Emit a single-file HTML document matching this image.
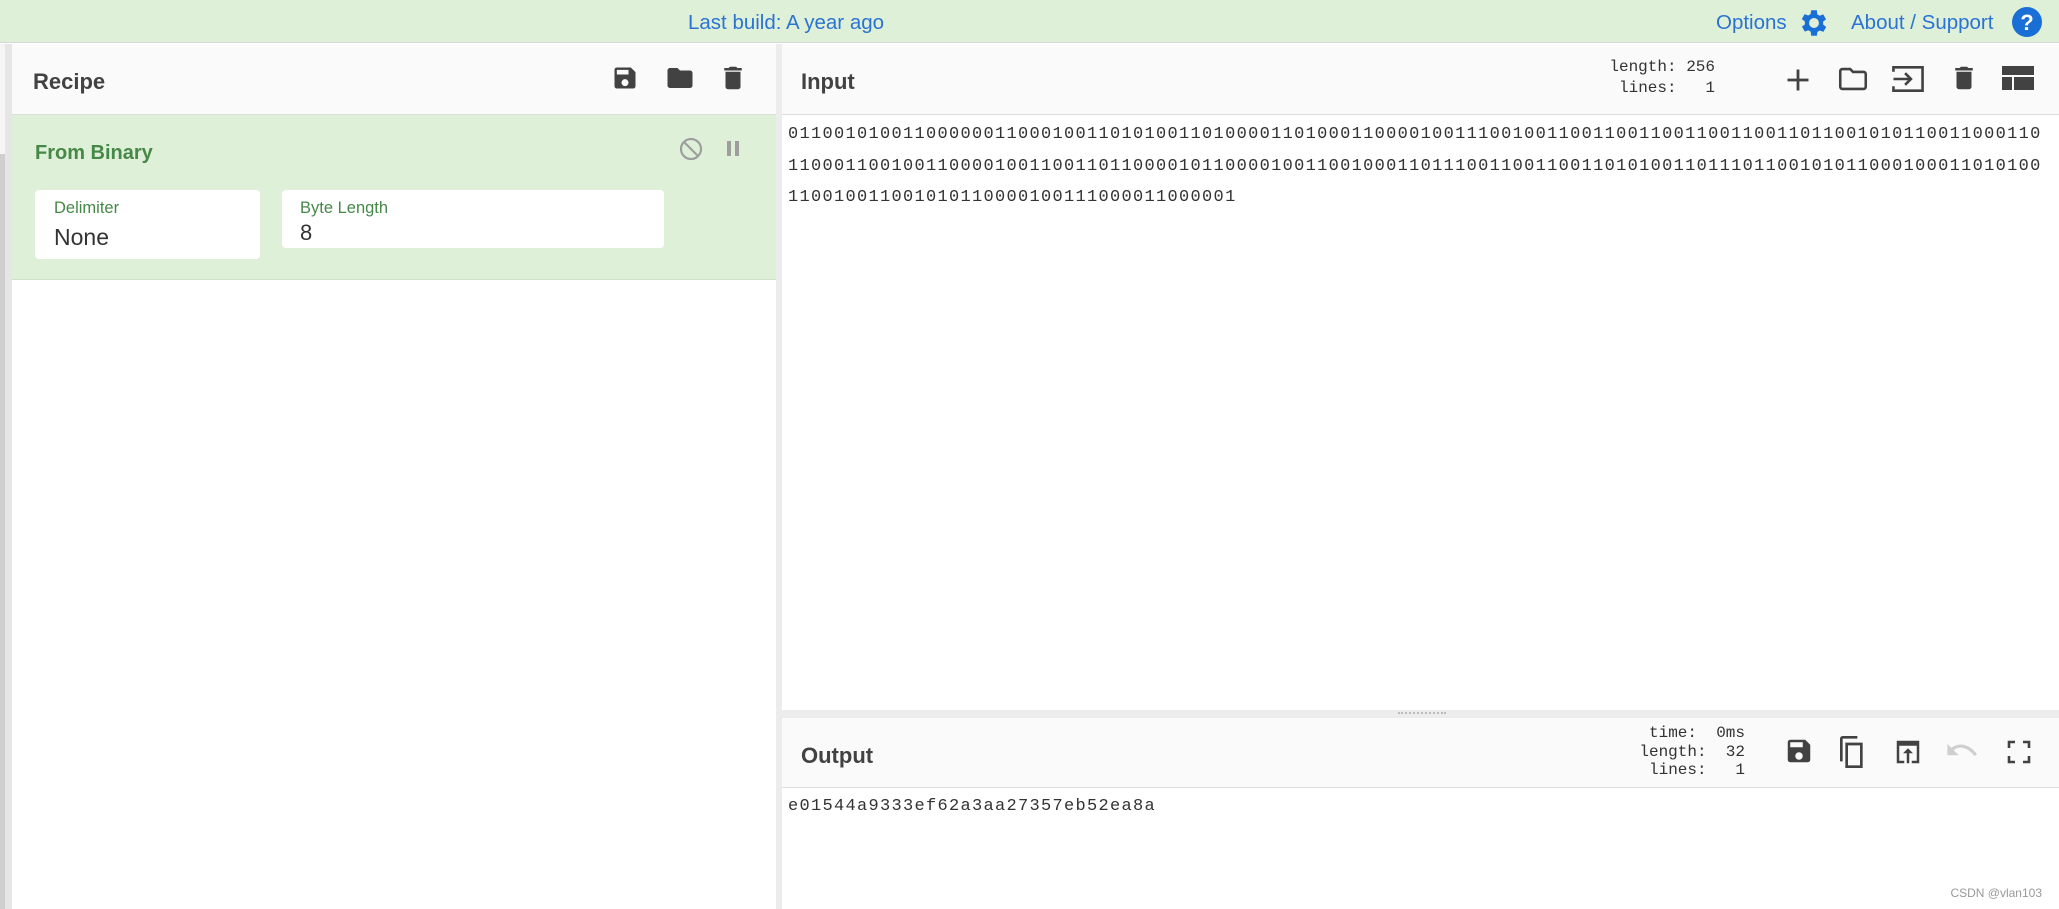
<!DOCTYPE html>
<html><head><meta charset="utf-8"><style>
*{margin:0;padding:0;box-sizing:border-box}
body{width:2059px;height:909px;overflow:hidden;background:#fff;font-family:"Liberation Sans",sans-serif;position:relative;color:#424242}
.a{position:absolute}
.mono{font-family:"Liberation Mono",monospace}
svg{position:absolute}
</style></head><body>
<div class="a" style="left:0;top:0;width:2059px;height:43px;background:#dff0d8;border-bottom:1px solid #d6d6d6"></div>
<div class="a" style="left:688px;top:11px;font-size:20.5px;color:#2a73d2">Last build: A year ago</div>
<div class="a" style="left:1716px;top:11px;font-size:20.5px;color:#2a73d2">Options</div>
<svg style="left:1797px;top:6px" width="34" height="34" viewBox="0 0 24 24"><path fill="#1a6fd6" d="M19.4 13a7.5 7.5 0 0 0 0-2l2.1-1.6-2-3.5-2.5 1a7 7 0 0 0-1.7-1L15 3h-4l-.4 2.7a7 7 0 0 0-1.7 1l-2.5-1-2 3.5L6.6 11a7.5 7.5 0 0 0 0 2l-2.1 1.6 2 3.5 2.5-1a7 7 0 0 0 1.7 1L11 21h4l.4-2.7a7 7 0 0 0 1.7-1l2.5 1 2-3.5zM13 15.5a3.5 3.5 0 1 1 0-7 3.5 3.5 0 0 1 0 7z" transform="translate(-1 0)"/></svg>
<div class="a" style="left:1851px;top:11px;font-size:20.5px;color:#2a73d2">About / Support</div>
<svg style="left:2012px;top:7px" width="30" height="30" viewBox="0 0 30 30"><circle cx="15" cy="15" r="15" fill="#1a6fd6"/><text x="15" y="23" text-anchor="middle" font-family="Liberation Sans" font-weight="bold" font-size="22" fill="#fff">?</text></svg>

<div class="a" style="left:0;top:44px;width:5px;height:110px;background:#f5f5f5"></div>
<div class="a" style="left:0;top:154px;width:5px;height:755px;background:#cfcfcf"></div>
<div class="a" style="left:5px;top:44px;width:7px;height:865px;background:#e6e6e6"></div>

<div class="a" style="left:12px;top:44px;width:764px;height:71px;background:#fafafa;border-bottom:1px solid #ddd"></div>
<div class="a" style="left:33px;top:69px;font-size:22px;font-weight:bold;color:#424242">Recipe</div>
<svg style="left:611px;top:63px" width="28" height="30" viewBox="0 0 24 24"><path fill="#424242" d="M17 3H5a2 2 0 0 0-2 2v14a2 2 0 0 0 2 2h14a2 2 0 0 0 2-2V7zm-5 16a3 3 0 1 1 0-6 3 3 0 0 1 0 6zm3-10H5V5h10z"/></svg>
<svg style="left:664px;top:63px" width="32" height="30" viewBox="0 0 24 24"><path fill="#424242" d="M10 4H4a2 2 0 0 0-2 2v12a2 2 0 0 0 2 2h16a2 2 0 0 0 2-2V8a2 2 0 0 0-2-2h-8z"/></svg>
<svg style="left:718px;top:63px" width="30" height="30" viewBox="0 0 24 24"><path fill="#424242" d="M6 19a2 2 0 0 0 2 2h8a2 2 0 0 0 2-2V7H6zM19 4h-3.5l-1-1h-5l-1 1H5v2h14z"/></svg>

<div class="a" style="left:12px;top:115px;width:764px;height:165px;background:#dff0d8;border-bottom:1px solid #cfe3c6"></div>
<div class="a" style="left:35px;top:142px;font-size:20px;font-weight:bold;color:#468847">From Binary</div>
<svg style="left:679px;top:137px" width="24" height="24" viewBox="0 0 24 24"><circle cx="12" cy="12" r="10" fill="none" stroke="#9e9e9e" stroke-width="2.2"/><path d="M5 5l14 14" stroke="#9e9e9e" stroke-width="2.2"/></svg>
<div class="a" style="left:727px;top:141px;width:4px;height:15px;background:#9e9e9e"></div>
<div class="a" style="left:735px;top:141px;width:4px;height:15px;background:#9e9e9e"></div>
<div class="a" style="left:35px;top:190px;width:225px;height:69px;background:#fff;border-radius:4px"></div>
<div class="a" style="left:54px;top:199px;font-size:16.5px;color:#468847">Delimiter</div>
<div class="a" style="left:54px;top:224px;font-size:23px;color:#333">None</div>
<div class="a" style="left:282px;top:190px;width:382px;height:58px;background:#fff;border-radius:4px"></div>
<div class="a" style="left:300px;top:199px;font-size:16.5px;color:#468847">Byte Length</div>
<div class="a" style="left:300px;top:220px;font-size:22px;color:#333">8</div>

<div class="a" style="left:776px;top:44px;width:6px;height:865px;background:#ececec"></div>

<div class="a" style="left:782px;top:44px;width:1277px;height:71px;background:#fafafa;border-bottom:1px solid #ddd"></div>
<div class="a" style="left:801px;top:69px;font-size:22px;font-weight:bold">Input</div>
<div class="a mono" style="left:1560px;top:57px;width:155px;text-align:right;font-size:16px;line-height:21px;white-space:pre;color:#333">length: 256
lines:   1</div>
<svg style="left:1784px;top:66px" width="28" height="28" viewBox="0 0 24 24"><path d="M12 3v18M3 12h18" stroke="#424242" stroke-width="2.4"/></svg>
<svg style="left:1836px;top:62px" width="34" height="34" viewBox="0 0 24 24"><path fill="none" stroke="#424242" stroke-width="1.8" d="M3 6.5a1.5 1.5 0 0 1 1.5-1.5H10l2 2h7.5A1.5 1.5 0 0 1 21 8.5v9a1.5 1.5 0 0 1-1.5 1.5h-15A1.5 1.5 0 0 1 3 17.5z"/></svg>
<svg style="left:1890px;top:63px" width="36" height="32" viewBox="0 0 24 22"><path fill="none" stroke="#424242" stroke-width="1.8" d="M2 6V3h20v16H2v-3M2 11h12M10 7l4 4-4 4"/></svg>
<svg style="left:1949px;top:62px" width="30" height="32" viewBox="0 0 24 24"><path fill="#424242" d="M6 19a2 2 0 0 0 2 2h8a2 2 0 0 0 2-2V7H6zM19 4h-3.5l-1-1h-5l-1 1H5v2h14z"/></svg>
<svg style="left:2002px;top:66px" width="32" height="24" viewBox="0 0 32 24"><rect x="0" y="0" width="32" height="9" fill="#424242"/><rect x="0" y="11" width="10" height="13" fill="#424242"/><rect x="12" y="11" width="20" height="13" fill="#424242"/></svg>

<div class="a mono" style="left:788px;top:119px;font-size:17px;letter-spacing:1.3px;line-height:31.5px;color:#333;white-space:pre">0110010100110000001100010011010100110100001101000110000100111001001100110011001100110011011001010110011000110
1100011001001100001001100110110000101100001001100100011011100110011001101010011011101100101011000100011010100
110010011001010110000100111000011000001</div>

<div class="a" style="left:782px;top:710px;width:1277px;height:8px;background:#ececec"></div>
<div class="a" style="left:1398px;top:712px;width:48px;height:3px;border-top:2px dotted #bbb"></div>
<div class="a" style="left:782px;top:718px;width:1277px;height:70px;background:#fafafa;border-bottom:1px solid #ddd"></div>
<div class="a" style="left:801px;top:743px;font-size:22px;font-weight:bold">Output</div>
<div class="a mono" style="left:1580px;top:724px;width:165px;text-align:right;font-size:16px;line-height:18.5px;white-space:pre;color:#333">time:  0ms
length:  32
lines:   1</div>
<svg style="left:1784px;top:736px" width="30" height="30" viewBox="0 0 24 24"><path fill="#424242" d="M17 3H5a2 2 0 0 0-2 2v14a2 2 0 0 0 2 2h14a2 2 0 0 0 2-2V7zm-5 16a3 3 0 1 1 0-6 3 3 0 0 1 0 6zm3-10H5V5h10z"/></svg>
<svg style="left:1836px;top:734px" width="32" height="36" viewBox="0 0 24 26"><path fill="none" stroke="#424242" stroke-width="2" d="M4 20V3a1 1 0 0 1 1-1h11M8 7h11v17H8z"/></svg>
<svg style="left:1893px;top:737px" width="30" height="30" viewBox="0 0 24 24"><path fill="#424242" d="M3 3h18v18h-6v-2h4V7H5v12h4v2H3z"/><path fill="#424242" d="M12 9l-4 4h3v8h2v-8h3z"/></svg>
<svg style="left:1946px;top:739px" width="34" height="24" viewBox="0 0 24 16"><path fill="none" stroke="#cfcfcf" stroke-width="2.2" d="M3 8c5-5 12-5 18 3"/><path fill="#cfcfcf" d="M1 3v8h8z"/></svg>
<svg style="left:2007px;top:740px" width="24" height="24" viewBox="0 0 24 24"><path fill="none" stroke="#424242" stroke-width="2.6" d="M2 8V2h6M16 2h6v6M22 16v6h-6M8 22H2v-6"/></svg>

<div class="a mono" style="left:788px;top:797px;font-size:17px;letter-spacing:1.3px;color:#333">e01544a9333ef62a3aa27357eb52ea8a</div>
<div class="a" style="left:1940px;top:886px;width:102px;text-align:right;font-size:12px;color:#999">CSDN @vlan103</div>
</body></html>
